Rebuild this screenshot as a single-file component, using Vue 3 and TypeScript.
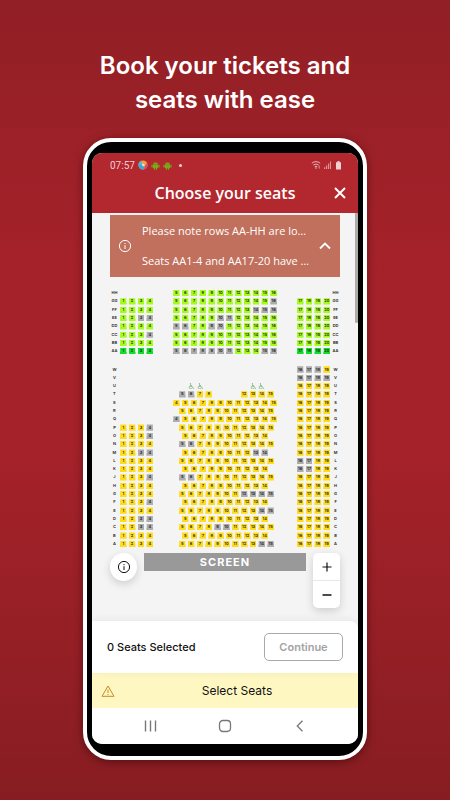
<script setup lang="ts">
import { ref } from 'vue'

type Tone = 'lime' | 'green' | 'gold' | 'taken'

interface Seat {
  id: string
  label: string
  tone: Tone
  col: number
  row: number
}

interface RowLabel {
  id: string
  text: string
  col: number
  row: number
}

// Every seat spans three tracks of a 78-track grid, so rows can be staggered by thirds.
const SPAN = 3
const LEFT = 4
const MIDDLE = 22
const RIGHT = 64
const LABEL_RIGHT = 76

const seats: Seat[] = []
const rowLabels: RowLabel[] = []

const upperRows = ['HH', 'GG', 'FF', 'EE', 'DD', 'CC', 'BB', 'AA']
const lowerRows = 'WVUTSRQPONMLKJHGFEDCBA'.split('')

const taken: Record<string, number[]> = {
  GG: [16],
  FF: [14, 15, 16],
  EE: [3, 4, 10, 11],
  DD: [5, 6, 9, 10],
  CC: [4],
  AA: [5, 6, 7, 8, 9, 10, 11, 15, 16],
  W: [16, 17, 18],
  V: [16, 17, 18, 19],
  T: [5, 6],
  Q: [4],
  P: [4],
  O: [4],
  N: [5, 6],
  M: [3, 4, 13, 14],
  L: [16, 17],
  K: [16, 17],
  J: [4, 5, 6],
  G: [12, 13, 14, 15],
  F: [4],
  E: [14, 15],
  D: [3, 4],
  C: [3, 4, 9, 10],
  A: [14, 15],
}

function addBlock(name: string, row: number, from: number, to: number, start: number, tone: Tone) {
  for (let n = from; n <= to; n++) {
    seats.push({
      id: `${name}${n}`,
      label: String(n),
      tone: taken[name]?.includes(n) ? 'taken' : tone,
      col: start + (n - from) * SPAN,
      row,
    })
  }
}

function addLabels(name: string, row: number) {
  rowLabels.push({ id: `${name}-l`, text: name, col: 1, row })
  rowLabels.push({ id: `${name}-r`, text: name, col: LABEL_RIGHT, row })
}

upperRows.forEach((name, i) => {
  const row = i + 1
  const sideTone: Tone = name === 'AA' ? 'green' : 'lime'
  addLabels(name, row)
  if (name !== 'HH') {
    addBlock(name, row, 1, 4, LEFT, sideTone)
    addBlock(name, row, 17, 20, RIGHT, sideTone)
  }
  addBlock(name, row, 5, 16, MIDDLE, 'lime')
})

lowerRows.forEach((name, i) => {
  const row = i + 10
  addLabels(name, row)
  addBlock(name, row, 16, 19, RIGHT, 'gold')
  if (i >= 7) addBlock(name, row, 1, 4, LEFT, 'gold')
  if (name === 'T') {
    addBlock(name, row, 5, 8, MIDDLE + 2, 'gold')
    addBlock(name, row, 12, 15, MIDDLE + 23, 'gold')
  } else if (name === 'S' || name === 'Q') {
    addBlock(name, row, 4, 15, MIDDLE, 'gold')
  } else if ('OMKHFDB'.includes(name)) {
    addBlock(name, row, 5, 14, MIDDLE + 3, 'gold')
  } else if (i > 3) {
    addBlock(name, row, 5, 15, MIDDLE + 2, 'gold')
  }
})

const wheelchairs = [27, 30, 48, 51]

const selected = ref(0)
</script>

<template>
  <main class="promo">
    <h1 class="headline">Book your tickets and<br />seats with ease</h1>

    <div class="phone">
      <div class="display">
        <header class="app-header">
          <div class="status">
            <span>07:57</span>
            <svg class="status-icon" viewBox="0 0 10 10" aria-hidden="true">
              <circle cx="5" cy="5" r="4.6" fill="#f0a23a" />
              <path d="M.4 5A4.6 4.6 0 0 0 5.6 9.6L6.5 7 3 3.5Z" fill="#39a9dc" />
              <path d="M.5 4.5A4.6 4.6 0 0 1 3 .8L4.6 3 2.5 5Z" fill="#58b7d8" />
              <path d="M9 2.8A4.6 4.6 0 0 1 5.6 9.6L7 6Z" fill="#d8437a" />
              <path d="M4.2 3.2 6.6 4.4 6 6.4 4 5.6Z" fill="#f7dfc8" />
            </svg>
            <svg v-for="n in 2" :key="n" class="status-icon droid" viewBox="0 0 10 10" aria-hidden="true">
              <path d="M2.2 3.7A2.9 2.9 0 0 1 7.8 3.7ZM2.2 4H7.8V8H6.7V9.6H5.5V8H4.5V9.6H3.3V8H2.2ZM.5 4.1H1.9V7.2H.5ZM8.1 4.1H9.5V7.2H8.1Z" fill="#79a916" />
              <path d="m2.8.8.8 1.2M7.2.8l-.8 1.2" stroke="#79a916" stroke-width=".5" />
            </svg>
            <span class="dot"></span>
            <svg class="signals" viewBox="0 0 31 10" aria-hidden="true">
              <g fill="none" stroke="#e6b3b6" stroke-width="1">
                <path d="M.8 3.2Q5 0 9.2 3.2M2.3 5Q5 3 7.7 5M3.7 6.7Q5 5.8 6.3 6.7" />
                <path d="M8.2 5.5V8.7" stroke-width=".8" />
              </g>
              <circle cx="5" cy="8" r=".8" fill="#e6b3b6" />
              <path d="M13 9V7.2H14.2V9ZM15 9V5.5H16.2V9ZM17 9V3.5H18.2V9Z" fill="#d99297" />
              <path d="M19 9V1.5H20V9Z" fill="#d99297" />
              <path d="M25 2.2H26.5V1H28.5V2.2H30V9.5H25Z" fill="#f1d0d2" />
            </svg>
          </div>
          <div class="title-bar">
            <h2>Choose your seats</h2>
            <button type="button" class="close" aria-label="Close">
              <svg viewBox="0 0 12 12" aria-hidden="true">
                <path d="m1 1 10 10M11 1 1 11" fill="none" stroke="#fff" stroke-width="2" />
              </svg>
            </button>
          </div>
        </header>

        <section class="stage">
          <span class="scroll-thumb"></span>
          <div class="notice">
            <svg class="info" viewBox="0 0 14 14" aria-hidden="true">
              <circle cx="7" cy="7" r="5.6" fill="none" stroke="currentColor" />
              <path d="M7 6.2V10M7 4V5.1" stroke="currentColor" />
            </svg>
            <div class="notice-text">
              <p>Please note rows AA-HH are lo…</p>
              <p>Seats AA1-4 and AA17-20 have …</p>
            </div>
            <button type="button" class="collapse" aria-label="Collapse notice">
              <svg viewBox="0 0 12 8" aria-hidden="true">
                <path d="m1 6.5 5-5 5 5" fill="none" stroke="#fff" stroke-width="1.8" />
              </svg>
            </button>
          </div>

          <div class="seat-map">
            <span
              v-for="l in rowLabels"
              :key="l.id"
              class="row-label"
              :style="{ gridColumn: `${l.col} / span 3`, gridRow: l.row }"
            >{{ l.text }}</span>
            <button
              v-for="s in seats"
              :key="s.id"
              type="button"
              class="seat"
              :class="s.tone"
              :disabled="s.tone === 'taken'"
              :style="{ gridColumn: `${s.col} / span 3`, gridRow: s.row }"
            >{{ s.label }}</button>
            <svg
              v-for="c in wheelchairs"
              :key="c"
              class="wheelchair"
              viewBox="0 0 8 8"
              :style="{ gridColumn: `${c} / span 3`, gridRow: 12 }"
              aria-hidden="true"
            >
              <circle cx="2.8" cy="1.1" r=".8" fill="#5fa565" />
              <path d="M2.9 2V4.6H5.2L6.4 6.9H7.4M3 3.2H4.8M2.2 3.8A2 2 0 1 0 5 6.3" fill="none" stroke="#5fa565" stroke-width=".8" />
            </svg>
          </div>

          <div class="controls">
            <button type="button" class="legend" aria-label="Seat information">
              <svg class="info" viewBox="0 0 14 14" aria-hidden="true">
                <circle cx="7" cy="7" r="5.6" fill="none" stroke="currentColor" />
                <path d="M7 6.2V10M7 4V5.1" stroke="currentColor" />
              </svg>
            </button>
            <div class="screen-label">SCREEN</div>
            <div class="zoom">
              <button type="button" aria-label="Zoom in">
                <svg viewBox="0 0 10 10" aria-hidden="true"><path d="M.5 5H9.5M5 .5V9.5" stroke="#111" stroke-width="1.2" /></svg>
              </button>
              <button type="button" aria-label="Zoom out">
                <svg viewBox="0 0 10 10" aria-hidden="true"><path d="M.5 5H9.5" stroke="#111" stroke-width="1.4" /></svg>
              </button>
            </div>
          </div>
        </section>

        <section class="summary">
          <span>{{ selected }} Seats Selected</span>
          <button type="button" class="continue" :disabled="selected === 0">Continue</button>
        </section>

        <div class="hint">
          <svg viewBox="0 0 14 12" aria-hidden="true">
            <path d="M7 1 13 11.3H1Z" fill="none" stroke="#c98a1e" stroke-linejoin="round" />
            <path d="M7 4.5V8M7 9V10" stroke="#c98a1e" />
          </svg>
          <span>Select Seats</span>
        </div>

        <nav class="system-nav" aria-label="System">
          <button type="button" aria-label="Recent apps">
            <svg viewBox="0 0 14 14" aria-hidden="true"><path d="M2.5 1.5V12.5M7.5 1.5V12.5M12.5 1.5V12.5" stroke="#777" stroke-width="1.4" /></svg>
          </button>
          <button type="button" aria-label="Home">
            <svg viewBox="0 0 14 14" aria-hidden="true"><rect x="1.5" y="1.5" width="11" height="11" rx="3.4" fill="none" stroke="#777" stroke-width="1.3" /></svg>
          </button>
          <button type="button" aria-label="Back">
            <svg viewBox="0 0 14 14" aria-hidden="true"><path d="M9.5 1.8 4.3 7l5.2 5.2" fill="none" stroke="#777" stroke-width="1.3" /></svg>
          </button>
        </nav>
      </div>
    </div>
  </main>
</template>

<style>
body {
  margin: 0;
}
</style>

<style scoped>
* {
  box-sizing: border-box;
}

button {
  margin: 0;
  padding: 0;
  border: 0;
  background: none;
  font-family: inherit;
  color: inherit;
}

svg {
  display: block;
}

.promo {
  min-height: 100vh;
  padding: 49px 83px 40px;
  background: linear-gradient(#911f25, #a6222a 34%, #a6222a 55%, #871d22);
  font-family: Inter, 'Open Sans', sans-serif;
  display: flex;
  flex-direction: column;
}

.headline {
  margin: 0 -60px 21px;
  color: #fff;
  font-size: 24px;
  font-weight: 600;
  line-height: 34px;
  text-align: center;
}

.phone {
  flex: 1;
  display: flex;
  padding: 11px 5px 12px;
  border: 4px solid #fff;
  border-radius: 28px;
  background: #000;
  box-shadow: 0 2px 8px rgba(40, 0, 0, 0.5);
}

.display {
  flex: 1;
  min-width: 0;
  display: flex;
  flex-direction: column;
  border-radius: 10px;
  overflow: hidden;
  background: #f4f4f4;
}

.app-header {
  height: 60px;
  background: #b3272f;
  color: #fff;
}

.status {
  display: flex;
  align-items: center;
  gap: 3px;
  height: 24px;
  padding: 0 16px 0 18px;
  font-family: Roboto, sans-serif;
  font-size: 10px;
  color: #f0cfd1;
}

.status-icon {
  width: 10px;
  height: 10px;
}

.droid {
  width: 9px;
  height: 9px;
}

.dot {
  width: 3px;
  height: 3px;
  margin-left: 4px;
  border-radius: 50%;
  background: #f0cfd1;
}

.signals {
  width: 31px;
  height: 10px;
  margin-left: auto;
}

.title-bar {
  display: grid;
  grid-template-columns: 30px 1fr 30px;
  align-items: center;
  height: 32px;
  padding: 0 3px;
}

.title-bar h2 {
  grid-column: 2;
  margin: 0;
  font-family: 'Open Sans', sans-serif;
  font-size: 16px;
  font-weight: 600;
  line-height: 32px;
  text-align: center;
}

.close {
  justify-self: center;
}

.close svg {
  width: 12px;
  height: 12px;
}

.stage {
  position: relative;
  flex: 1;
  padding: 2px 18px 0;
}

.scroll-thumb {
  position: absolute;
  top: 0;
  right: 0;
  width: 3px;
  height: 110px;
  border-radius: 0 0 2px 2px;
  background: #ababab;
}

.notice {
  display: flex;
  align-items: center;
  height: 62px;
  padding: 0 9px 0 8px;
  background: #c0705c;
  color: #fff;
}

.info {
  width: 14px;
  height: 14px;
}

.notice-text {
  flex: 1;
  min-width: 0;
  margin-left: 10px;
}

.notice p {
  margin: 0;
  font-family: 'Open Sans', sans-serif;
  font-size: 11px;
  line-height: 30px;
  white-space: nowrap;
}

.collapse svg {
  width: 12px;
  height: 8px;
}

.seat-map {
  display: grid;
  grid-template-columns: repeat(78, 1fr);
  grid-template-rows: repeat(8, 1fr) 1.2fr repeat(22, 1fr);
  aspect-ratio: 230 / 259;
  margin-top: 12px;
}

.row-label,
.seat {
  display: flex;
  align-items: center;
  justify-content: center;
  min-width: 0;
  min-height: 0;
  font-size: 4px;
  font-weight: 600;
  line-height: 6px;
  color: #222;
}

.seat {
  position: relative;
  z-index: 0;
  margin: 1px;
}

.seat::before {
  content: '';
  position: absolute;
  z-index: -1;
  inset: 0;
  background: var(--tone);
  clip-path: polygon(5% 0, 95% 0, 95% 60%, 100% 60%, 100% 100%, 0 100%, 0 60%, 5% 60%);
}

.lime {
  --tone: #a5fb1c;
}

.green {
  --tone: #12dc2c;
}

.gold {
  --tone: #ffdc1a;
}

.taken {
  --tone: #adadad;
}

.wheelchair {
  width: 100%;
  height: 100%;
  padding: 1px;
}

.controls {
  display: flex;
  justify-content: space-between;
  align-items: flex-start;
  gap: 7px;
  margin-top: 5px;
}

.legend {
  display: grid;
  place-items: center;
  width: 27px;
  height: 28px;
  border-radius: 50%;
  background: #fff;
  color: #111;
  box-shadow: 0 3px 8px rgba(0, 0, 0, 0.16);
}

.screen-label {
  flex: 1;
  height: 18px;
  background: #999;
  color: #fff;
  font-size: 11px;
  font-weight: 700;
  line-height: 18px;
  letter-spacing: 1px;
  text-align: center;
}

.zoom {
  display: flex;
  flex-direction: column;
  width: 27px;
  border-radius: 5px;
  background: #fff;
  box-shadow: 0 3px 8px rgba(0, 0, 0, 0.16);
}

.zoom button {
  display: grid;
  place-items: center;
  height: 27px;
}

.zoom button + button {
  height: 28px;
  border-top: 1px solid #e8e8e8;
}

.zoom svg {
  width: 10px;
  height: 10px;
}

.summary {
  display: flex;
  align-items: center;
  justify-content: space-between;
  height: 52px;
  padding: 0 15px;
  border-radius: 0 8px 0 0;
  background: #fff;
  box-shadow: 0 -1px 8px rgba(0, 0, 0, 0.06);
  color: #111;
  font-size: 11px;
  font-weight: 500;
  position: relative;
}

.continue {
  width: 79px;
  height: 28px;
  border: 1px solid #aaa;
  border-radius: 5px;
  color: #a3a3a3;
  font-size: 11px;
  font-weight: 600;
}

.hint {
  display: grid;
  grid-template-columns: 14px 1fr;
  align-items: center;
  height: 35px;
  padding: 0 9px;
  background: #fff7c2;
  color: #111;
  font-size: 12px;
  text-align: center;
}

.hint svg {
  width: 14px;
  height: 12px;
}

.hint span {
  padding-left: 10px;
}

.system-nav {
  display: flex;
  justify-content: space-between;
  align-items: center;
  height: 36px;
  padding: 0 51px;
  background: #fff;
}

.system-nav svg {
  width: 14px;
  height: 14px;
}
</style>
